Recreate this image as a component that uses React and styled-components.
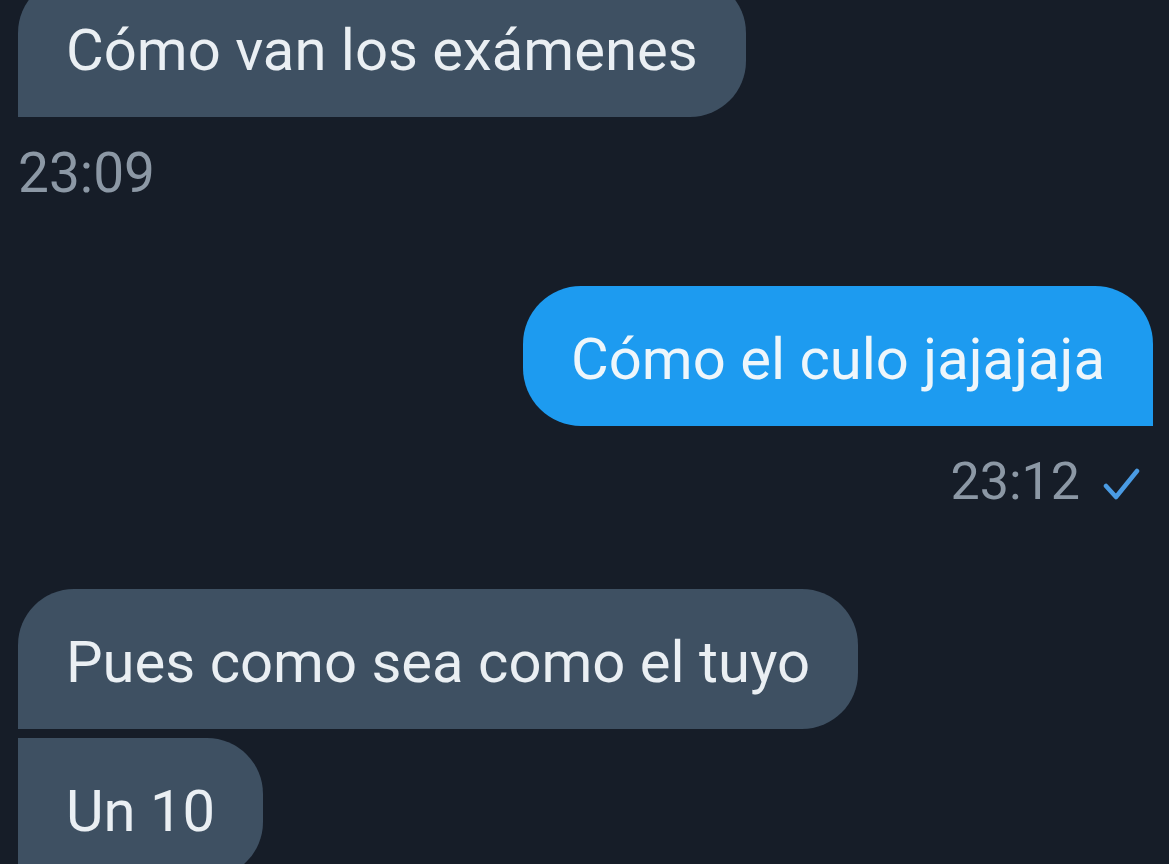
import React from 'react';
import styled, { createGlobalStyle } from 'styled-components';

const Global = createGlobalStyle`
  html, body { margin: 0; padding: 0; background: #161d28; }
  body { font-family: Roboto, "Noto Sans", "Liberation Sans", sans-serif; overflow: hidden; }
`;

const Chat = styled.main`
  width: 1169px;
  height: 864px;
  overflow: hidden;
  box-sizing: border-box;
  padding: 0 16px 0 18px;
  display: flex;
  flex-direction: column;
  background: #161d28;
`;

const Group = styled.section`
  display: flex;
  flex-direction: column;
  align-items: ${p => (p.$mine ? 'flex-end' : 'flex-start')};
  gap: 9px;
  margin-top: ${p => p.$top}px;
`;

const Bubble = styled.div`
  box-sizing: border-box;
  padding: 40px 48px 34px;
  font-size: 58px;
  line-height: 66px;
  white-space: nowrap;
  color: ${p => (p.$mine ? '#eef6fb' : '#eaeff3')};
  background: ${p => (p.$mine ? '#1d9bf0' : '#3e5062')};
  border-radius: ${p => p.$radius};
`;

const MetaRow = styled.div`
  display: flex;
  align-items: center;
  gap: 22px;
  margin-top: 17px;
  margin-right: ${p => (p.$mine ? '13px' : '0')};
`;

const Time = styled.span`
  font-size: ${p => p.$size || 52}px;
  line-height: 60px;
  color: #8c98a5;
`;

const Check = styled.svg`
  width: 38px;
  height: 36px;
  display: block;
  margin-top: 4px;
`;

export default function App() {
  return (
    <>
      <Global />
      <Chat>
        <Group $top={-23}>
          <Bubble $radius="56px 56px 56px 0">Cómo van los exámenes</Bubble>
          <MetaRow>
            <Time $size={55}>23:09</Time>
          </MetaRow>
        </Group>

        <Group $mine $top={83}>
          <Bubble $mine $radius="58px 58px 0 58px">Cómo el culo jajajaja</Bubble>
          <MetaRow $mine>
            <Time>23:12</Time>
            <Check viewBox="0 0 38 36" aria-hidden="true">
              <polyline
                points="4,20 14,31 35,5"
                fill="none"
                stroke="#4a9be3"
                strokeWidth="4.5"
                strokeLinecap="round"
                strokeLinejoin="round"
              />
            </Check>
          </MetaRow>
        </Group>

        <Group $top={77}>
          <Bubble $radius="56px 56px 56px 0">Pues como sea como el tuyo</Bubble>
          <Bubble $radius="0 56px 56px 0">Un 10</Bubble>
        </Group>
      </Chat>
    </>
  );
}
